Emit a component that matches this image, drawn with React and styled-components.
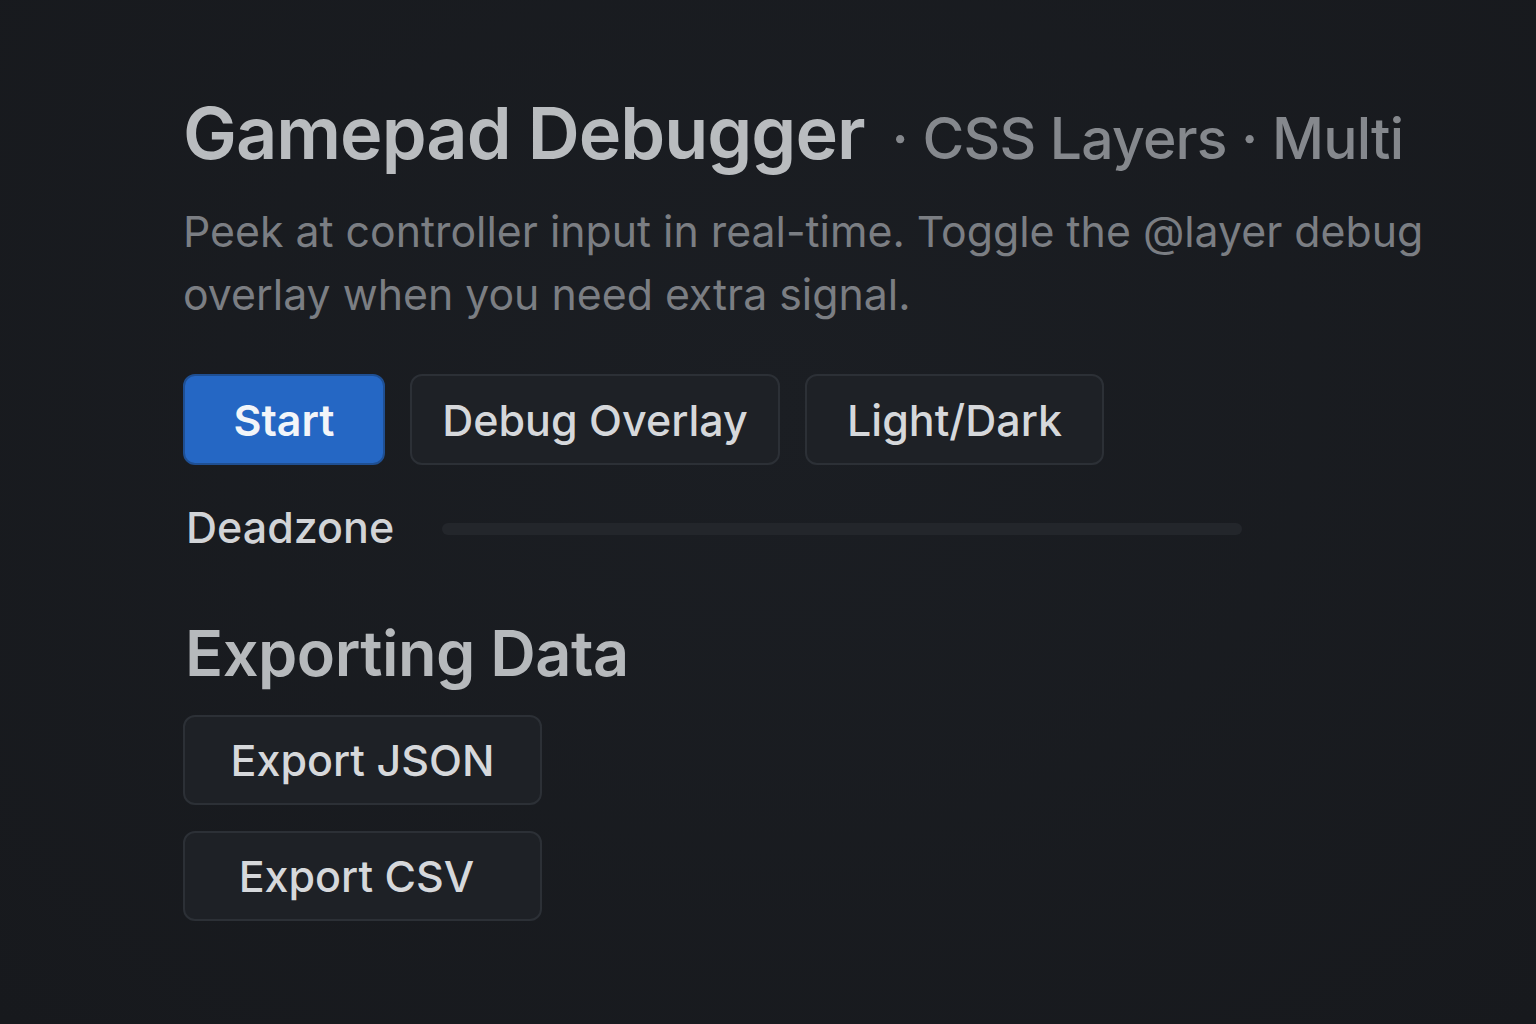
import React from "react";
import styled, { createGlobalStyle } from "styled-components";

const GlobalStyle = createGlobalStyle`
    html, body {
        margin: 0;
        padding: 0;
        background: #181b20;
    }
    body {
        font-family: Inter, "Liberation Sans", Arial, sans-serif;
        -webkit-font-smoothing: antialiased;
    }
`;

const Page = styled.div`
    width: 1536px;
    height: 1024px;
    box-sizing: border-box;
    padding: 89px 0 0 183px;
    background: radial-gradient(ellipse at 50% 40%, #1b1e23 0%, #17191d 100%);
`;

const Header = styled.h1`
    margin: 0;
    display: flex;
    align-items: baseline;
    gap: 27px;
    white-space: nowrap;
`;

const Title = styled.span`
    font-size: 72px;
    font-weight: 600;
    letter-spacing: -1px;
    color: #b9bcbf;
`;

const Sub = styled.span`
    font-size: 57px;
    font-weight: 500;
    letter-spacing: -0.8px;
    color: #85888d;
`;

const Lead = styled.p`
    margin: 24px 0 0;
    width: 1260px;
    font-size: 42.8px;
    line-height: 63px;
    font-weight: 400;
    color: #7b7e83;
`;

const ButtonRow = styled.div`
    display: flex;
    gap: 25px;
    margin-top: 48px;
`;

const Button = styled.button`
    height: ${(p) => p.$h || 91}px;
    width: ${(p) => p.$w}px;
    box-sizing: border-box;
    border-radius: 12px;
    border: 2px solid ${(p) => (p.$primary ? "#1f4f92" : "#2c3036")};
    background: ${(p) => (p.$primary ? "#2567c4" : "#1e2126")};
    color: ${(p) => (p.$primary ? "#f2f5f9" : "#d6d8db")};
    font-family: inherit;
    font-size: 43px;
    font-weight: ${(p) => (p.$primary ? 600 : 500)};
    padding: 0 ${(p) => p.$shift || 0}px 0 0;
`;

const SliderRow = styled.div`
    display: flex;
    align-items: center;
    margin-top: 36px;
    padding-left: 3px;
`;

const Label = styled.span`
    width: 256px;
    font-size: 43px;
    font-weight: 500;
    color: #d2d4d7;
`;

const Track = styled.div`
    width: 800px;
    height: 12px;
    border-radius: 6px;
    background: #23262b;
    margin-top: 3px;
`;

const Section = styled.h2`
    margin: 62px 0 0 2px;
    font-size: 63px;
    font-weight: 600;
    letter-spacing: -0.5px;
    color: #b6b9bc;
`;

const ExportList = styled.div`
    display: flex;
    flex-direction: column;
    gap: 26px;
    margin-top: 24px;
`;

export default function App() {
    return (
        <>
            <GlobalStyle />
            <Page>
                <Header>
                    <Title>Gamepad Debugger</Title>
                    <Sub>· CSS Layers · Multi</Sub>
                </Header>
                <Lead>
                    Peek at controller input in real-time. Toggle the @layer debug overlay when you need extra signal.
                </Lead>
                <ButtonRow>
                    <Button $primary $w={202}>Start</Button>
                    <Button $w={370}>Debug Overlay</Button>
                    <Button $w={299}>Light/Dark</Button>
                </ButtonRow>
                <SliderRow>
                    <Label>Deadzone</Label>
                    <Track />
                </SliderRow>
                <Section>Exporting Data</Section>
                <ExportList>
                    <Button $w={359} $h={90}>Export JSON</Button>
                    <Button $w={359} $h={90} $shift={12}>Export CSV</Button>
                </ExportList>
            </Page>
        </>
    );
}
